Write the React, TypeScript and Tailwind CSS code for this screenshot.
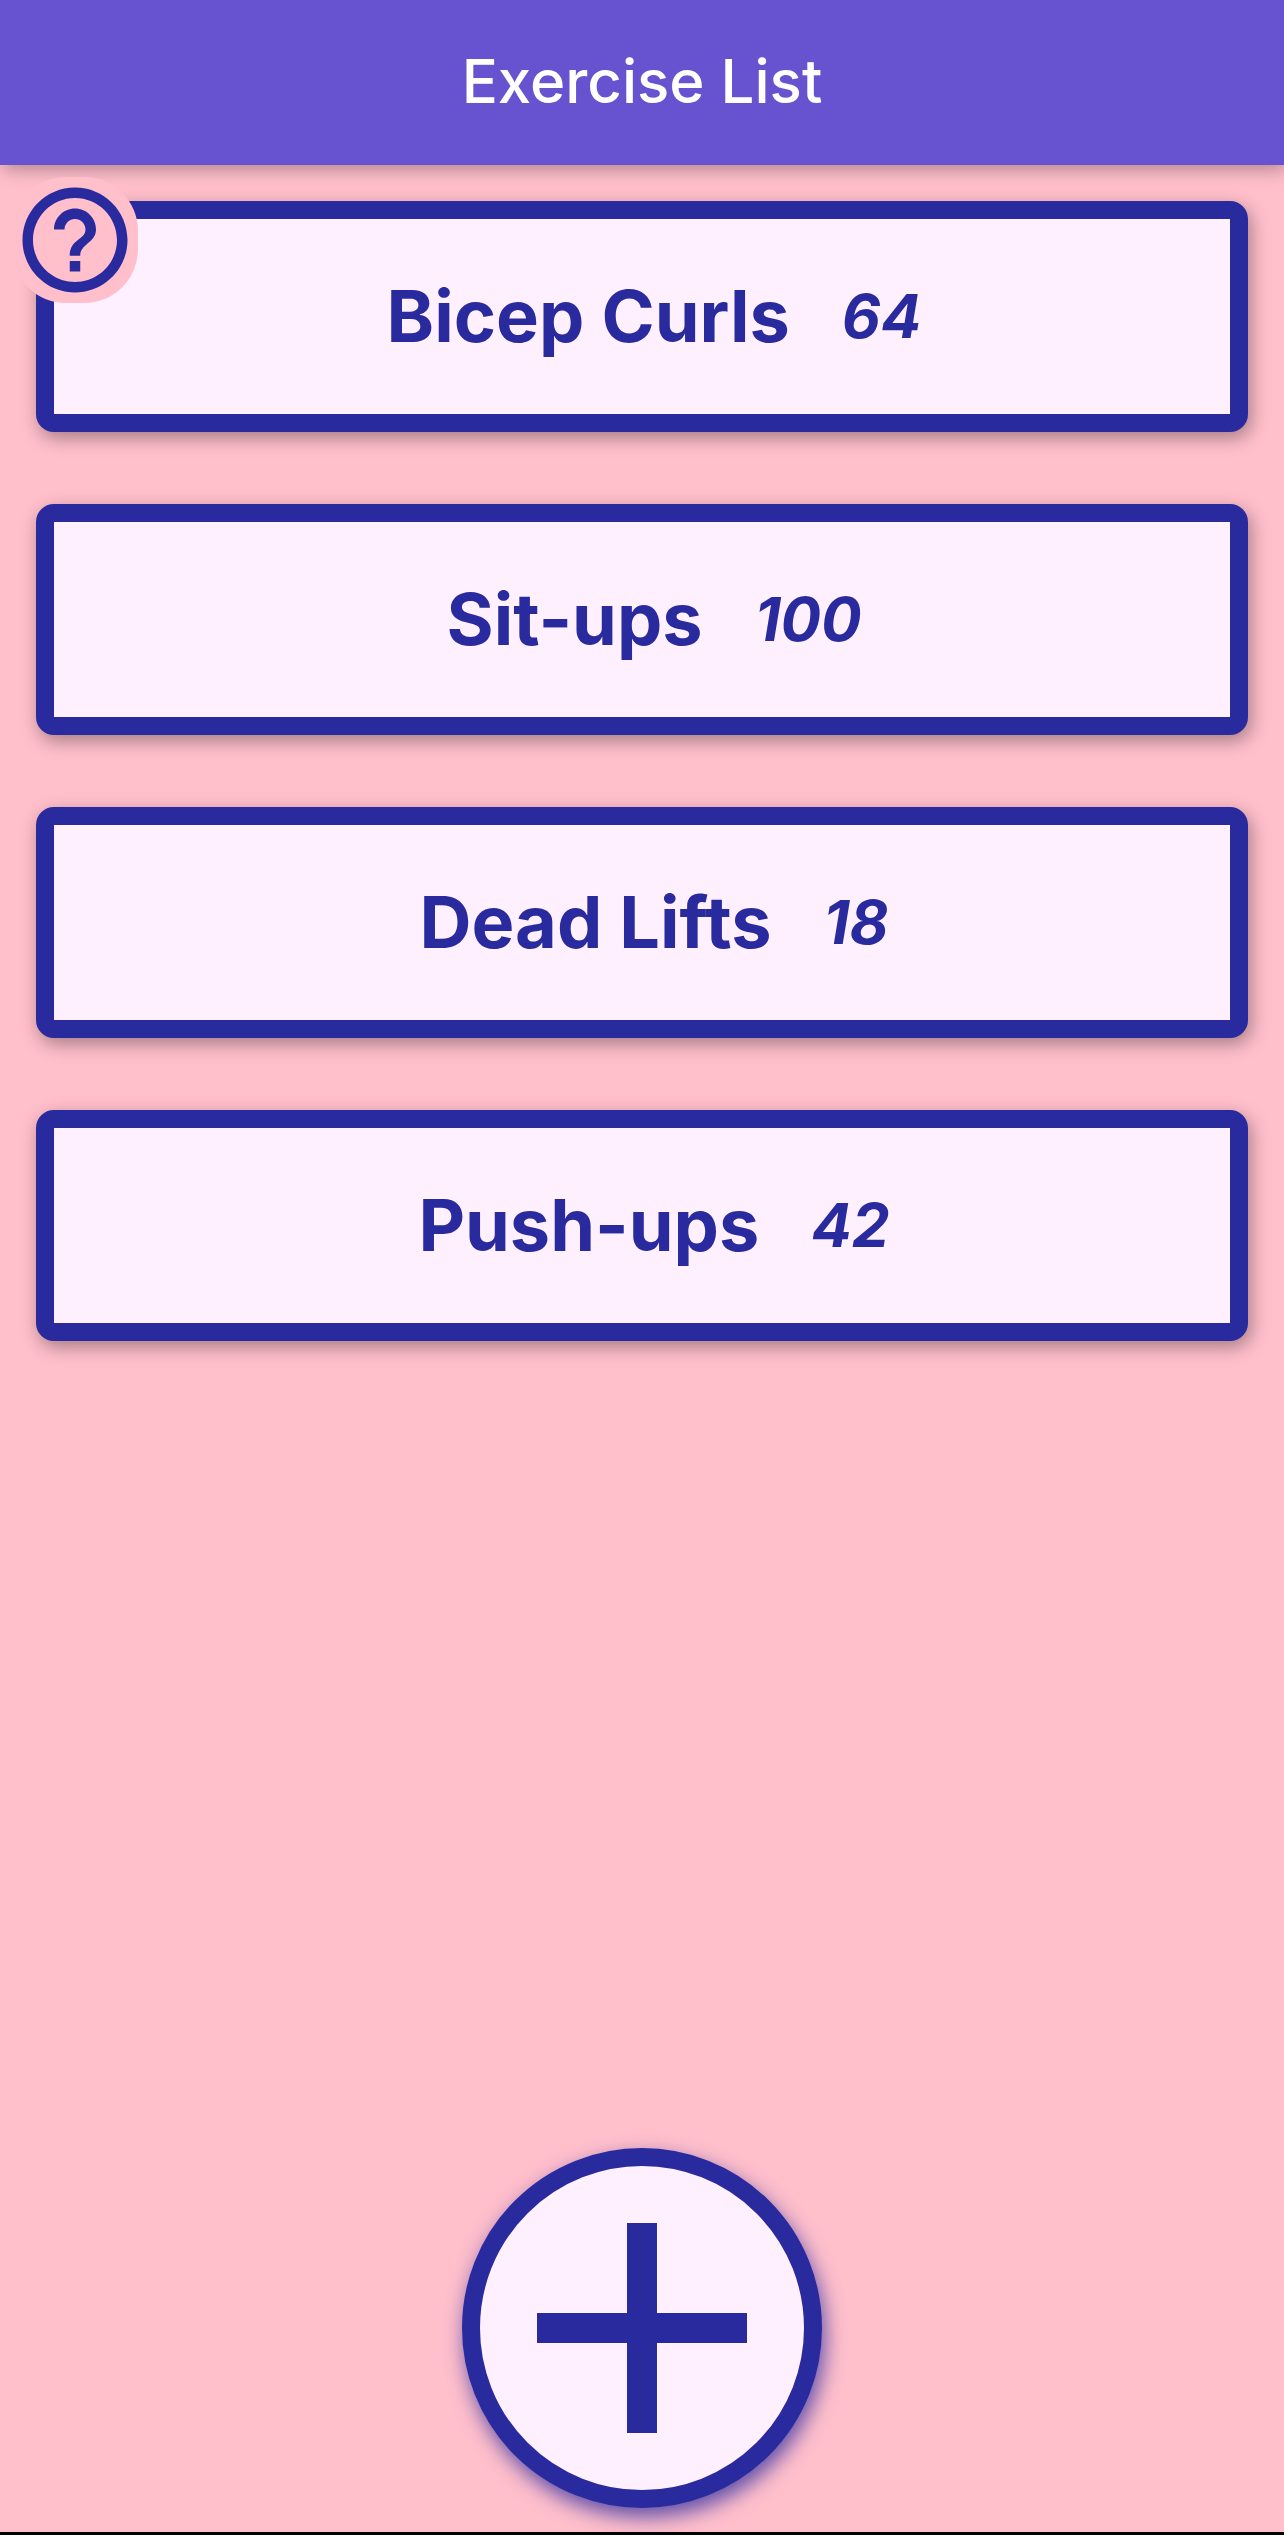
import { MdAdd, MdHelpOutline } from "react-icons/md";

type Exercise = { name: string; count: number };

const exercises: Exercise[] = [
  { name: "Bicep Curls", count: 64 },
  { name: "Sit-ups", count: 100 },
  { name: "Dead Lifts", count: 18 },
  { name: "Push-ups", count: 42 },
];

function ExerciseCard({ name, count }: Exercise) {
  return (
    <button
      type="button"
      className="flex h-[231px] w-full items-center justify-center gap-[52px] rounded-[18px] border-[18px] border-[#2a2a9f] bg-[#fff0ff] pb-0.5 pl-6 text-[#2a2a9f] shadow-[3px_6px_18px_rgba(0,0,0,0.35)]"
    >
      <span className="text-[72px] leading-none font-bold">{name}</span>
      <span className="text-[60px] leading-none font-bold italic">{count}</span>
    </button>
  );
}

export default function App() {
  return (
    <div className="flex min-h-screen flex-col border-b-[3px] border-black bg-[#ffbfcb] font-['Inter',sans-serif]">
      <header className="flex h-[165px] items-center justify-center bg-[#6753cf] pb-1 shadow-[3px_3px_18px_rgba(0,0,0,0.35)]">
        <h1 className="text-[60px] leading-none font-medium text-white">Exercise List</h1>
      </header>
      <main className="relative flex grow flex-col px-9 pt-9 pb-6">
        <button
          type="button"
          aria-label="Help"
          className="absolute top-3 left-3 rounded-[54px] bg-[#ffbfcb] text-[#2a2a9f]"
        >
          <MdHelpOutline className="size-[126px]" />
        </button>
        <ul className="flex flex-col gap-[72px]">
          {exercises.map((exercise) => (
            <li key={exercise.name}>
              <ExerciseCard {...exercise} />
            </li>
          ))}
        </ul>
        <button
          type="button"
          aria-label="Add exercise"
          className="mt-auto flex size-[360px] items-center justify-center self-center rounded-full border-[18px] border-[#2a2a9f] bg-[#fff0ff] text-[#2a2a9f] shadow-[3px_9px_20px_rgba(42,42,159,0.75)]"
        >
          <MdAdd className="size-[360px] shrink-0" />
        </button>
      </main>
    </div>
  );
}
